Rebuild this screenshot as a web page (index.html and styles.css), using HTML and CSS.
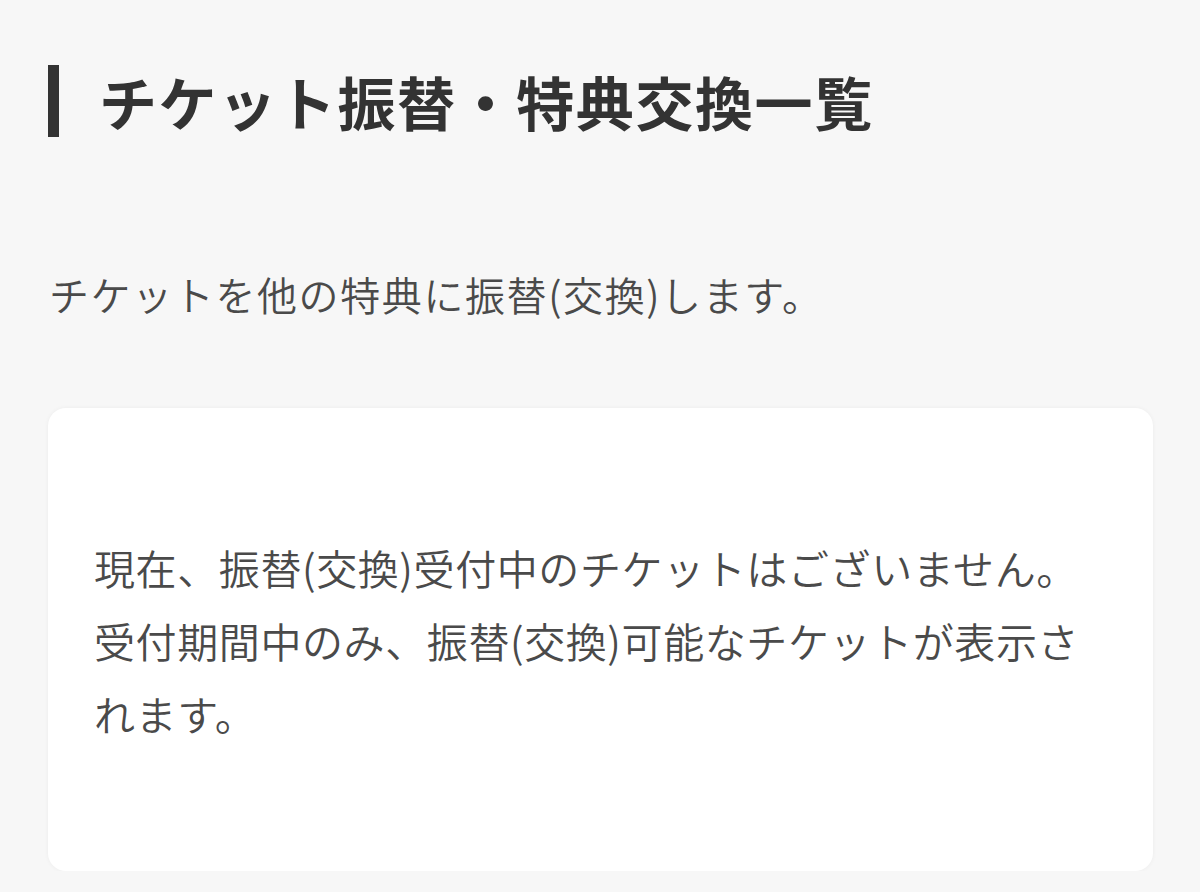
FILE: index.html
```html
<!DOCTYPE html>
<html lang="ja">
<head>
<meta charset="utf-8">
<title>チケット振替・特典交換一覧</title>
<link rel="stylesheet" href="styles.css">
</head>
<body>
<main class="page">
  <h1 class="page-title">チケット振替・特典交換一覧</h1>
  <p class="lead">チケットを他の特典に振替(交換)します。</p>
  <section class="card">
    <p class="card-text">現在、振替(交換)受付中のチケットはございません。<br>受付期間中のみ、振替(交換)可能なチケットが表示されます。</p>
  </section>
</main>
</body>
</html>
```

FILE: styles.css
```css
html, body {
  margin: 0;
  padding: 0;
  background: #f7f7f7;
}
body {
  font-family: "Noto Sans CJK JP", "Noto Sans", sans-serif;
  color: #4a4a4a;
}
.page {
  padding: 65px 47px 0 48px;
}
.page-title {
  margin: 0;
  border-left: 11px solid #333;
  padding-left: 40px;
  font-size: 58px;
  line-height: 72px;
  font-weight: 700;
  color: #333;
  letter-spacing: 1.6px;
}
.lead {
  margin: 127px 0 0 1px;
  font-size: 40px;
  line-height: 60px;
  letter-spacing: 1.6px;
  font-weight: 350;
  color: #4a4a4a;
}
.card {
  margin-top: 84px;
  width: 1105px;
  box-sizing: border-box;
  background: #fff;
  border-radius: 18px;
  box-shadow: 0 0 4px rgba(0,0,0,0.05);
  padding: 123px 47px 121px 46px;
}
.card-text {
  margin: 0;
  font-size: 41px;
  line-height: 73px;
  letter-spacing: 0.6px;
  font-weight: 350;
  color: #4a4a4a;
}
```
